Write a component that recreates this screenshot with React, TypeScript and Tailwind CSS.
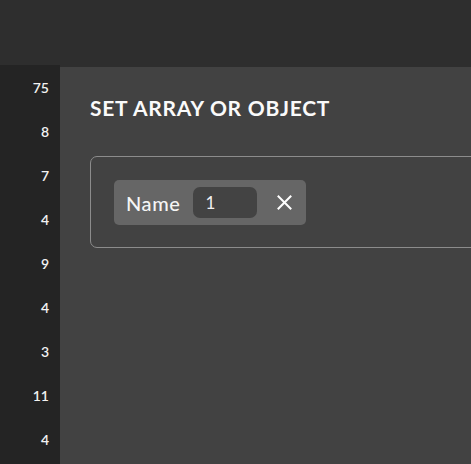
import React from "react";

const nums = ["75", "8", "7", "4", "9", "4", "3", "11", "4"];

export default function App() {
  return (
    <div
      className="w-[471px] h-[464px] overflow-hidden flex flex-col bg-[#424242] text-white"
      style={{ fontFamily: "Lato, 'Noto Sans', sans-serif" }}
    >
      <div className="h-[67px] shrink-0 bg-[#2e2e2e]" />
      <div className="flex flex-1 min-h-0">
        <div className="w-[60px] shrink-0 bg-[#242424] flex flex-col -mt-[2px]">
          {nums.map((n, i) => (
            <div
              key={i}
              className="h-[44px] flex items-center justify-end pr-[11px] text-[14px] font-semibold text-[#f2f2f2]"
            >
              {n}
            </div>
          ))}
        </div>
        <div className="flex-1 min-w-0 pl-[30px] pt-[29px]">
          <h1 className="text-[21px] leading-[24px] font-bold tracking-[0.75px] text-[#fafafa]">
            SET ARRAY OR OBJECT
          </h1>
          <div className="mt-[36px] w-[520px] h-[92px] border border-[#8c8c8c] rounded-[7px] pl-[23px] pt-[23px]">
            <div className="inline-flex items-center h-[45px] bg-[#666666] rounded-[5px] pl-[12px] pr-[14px]">
              <span className="text-[20px] font-medium tracking-[0.6px] text-[#f5f5f5]">Name</span>
              <div className="ml-[12px] w-[64px] h-[31px] rounded-[7px] bg-[#434343] flex items-center pl-[13px] text-[17px] text-[#f0f0f0]">
                1
              </div>
              <svg
                className="ml-[20px]"
                width="15"
                height="15"
                viewBox="0 0 15 15"
                fill="none"
                stroke="#ffffff"
                strokeWidth="2"
                strokeLinecap="square"
              >
                <path d="M1.5 1.5 L13.5 13.5 M13.5 1.5 L1.5 13.5" />
              </svg>
            </div>
          </div>
        </div>
      </div>
    </div>
  );
}
